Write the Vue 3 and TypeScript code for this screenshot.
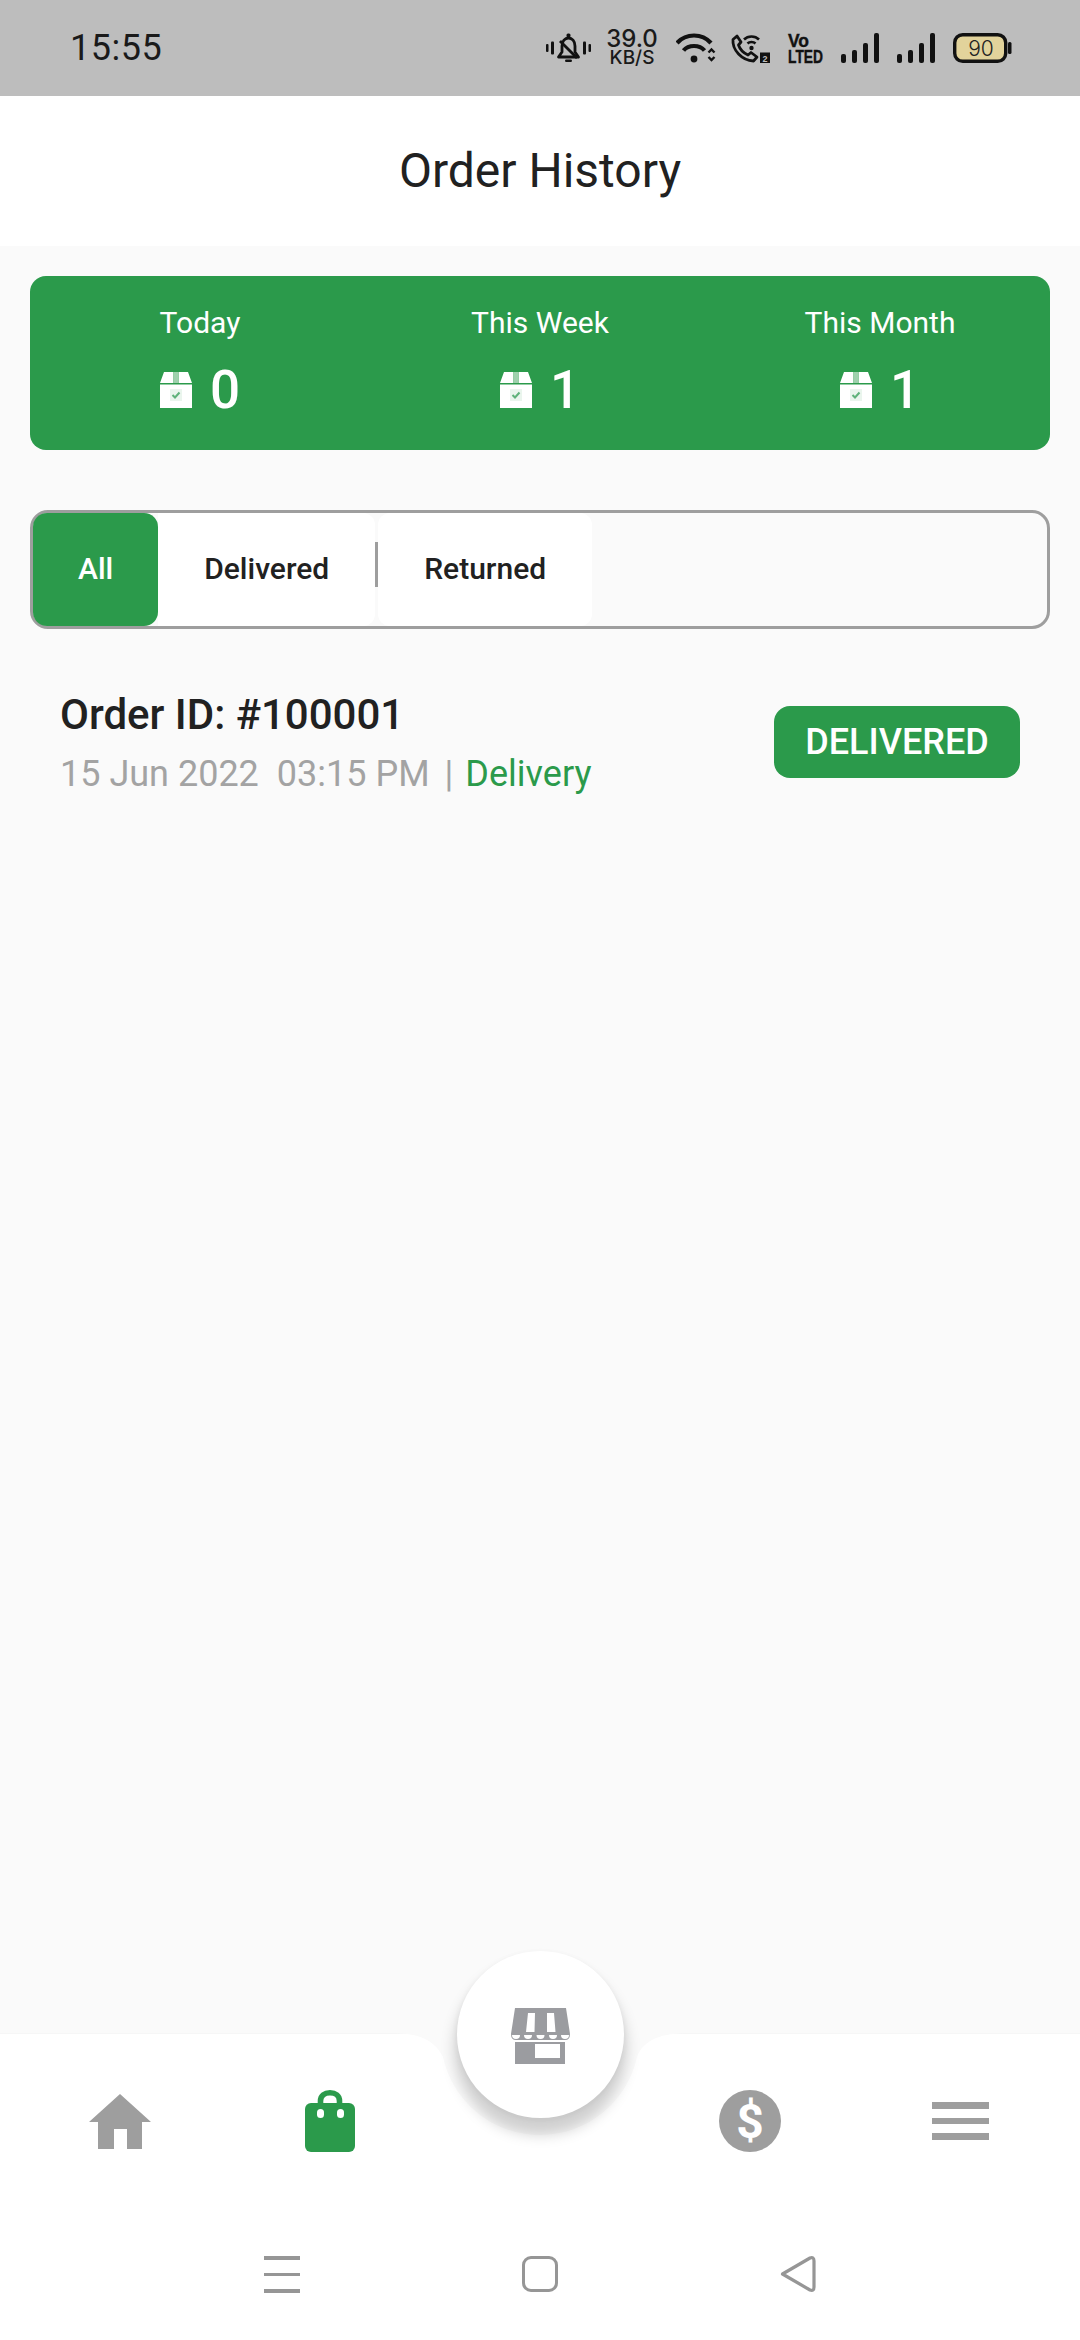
<script setup lang="ts">
const stats = [
  { label: 'Today', value: 0 },
  { label: 'This Week', value: 1 },
  { label: 'This Month', value: 1 },
]
const bars = [
  { x: 0, h: 9 },
  { x: 11, h: 13 },
  { x: 22, h: 20 },
  { x: 33, h: 30 },
]
const scallops = [5, 17, 29.5, 42, 54]
</script>

<template>
  <div class="page">
    <div class="status">
      <span class="time">15:55</span>
      <div class="status-icons">
        <svg class="ic" width="45" height="30" viewBox="0 0 45 30">
          <rect x="0" y="11" width="2.5" height="8" rx="1" />
          <rect x="5" y="8.5" width="3" height="13" rx="1" />
          <rect x="37" y="8.5" width="3" height="13" rx="1" />
          <rect x="42.5" y="11" width="2.5" height="8" rx="1" />
          <path d="M12.5 24 L16 19 V13 C16 8 19 5 22.5 5 C26 5 29 8 29 13 V19 L32.5 24 Z" fill="none" stroke="#111" stroke-width="2.8" stroke-linejoin="round" />
          <path d="M14 8 L31 25" stroke="#111" stroke-width="2.8" />
          <rect x="20.5" y="0.5" width="4" height="4" rx="1.5" />
          <rect x="19" y="26.5" width="7" height="2.5" rx="1.2" />
        </svg>
        <div class="speed"><span class="speed-num">39.0</span><span class="speed-unit">KB/S</span></div>
        <svg class="ic wifi" width="40" height="30" viewBox="0 0 40 30">
          <path d="M1 10 C10 0 26 0 35 10" fill="none" stroke="#111" stroke-width="4.2" />
          <path d="M7.5 17.5 C12.5 11.5 23.5 11.5 28.5 17.5" fill="none" stroke="#111" stroke-width="4.2" />
          <circle cx="18" cy="26" r="3.4" />
          <path d="M32.5 19.5 L35.5 16.5 L38.5 19.5 M32.5 24 L35.5 27 L38.5 24" fill="none" stroke="#111" stroke-width="2.4" />
        </svg>
        <svg class="ic phone" width="40" height="30" viewBox="0 0 40 30">
          <path d="M3 6.5 L7 3 L11 9 L8.5 12 C10 16.5 13.5 20 18 22 L21 19.5 L27 24 L23.5 28 C12 27.5 2 17 3 6.5 Z" fill="none" stroke="#111" stroke-width="2.8" stroke-linejoin="round" />
          <path d="M14 6.5 C18 2.5 25 2.5 29 6.5" fill="none" stroke="#111" stroke-width="2.6" />
          <path d="M17.5 10.5 C19.5 8.5 23.5 8.5 25.5 10.5" fill="none" stroke="#111" stroke-width="2.6" />
          <circle cx="21.5" cy="15" r="2.2" />
          <rect x="30" y="19.5" width="10" height="11.5" fill="#111" />
          <text x="35" y="29" class="two">2</text>
        </svg>
        <svg class="ic volte" width="35" height="38" viewBox="0 -4 35 38">
          <text x="0" y="13.5" class="vo" textLength="21" lengthAdjust="spacingAndGlyphs">Vo</text>
          <text x="0" y="30" class="lte" textLength="35" lengthAdjust="spacingAndGlyphs">LTED</text>
        </svg>
        <svg v-for="n in 2" :key="n" class="ic" width="38" height="30" viewBox="0 0 38 30">
          <rect v-for="b in bars" :key="b.x" :x="b.x" :y="30 - b.h" width="5" :height="b.h" rx="2" />
        </svg>
        <svg class="ic" width="59" height="30" viewBox="0 0 59 30">
          <rect x="1.7" y="1.7" width="51" height="26.6" rx="8" fill="#e2d39b" stroke="#111" stroke-width="3.4" />
          <rect x="55" y="9" width="3.5" height="12" rx="1.5" />
          <text x="28" y="22.5" class="batt">90</text>
        </svg>
      </div>
    </div>

    <header class="header">Order History</header>

    <main class="main">
      <section class="summary">
        <div v-for="s in stats" :key="s.label" class="stat">
          <span class="stat-label">{{ s.label }}</span>
          <div class="stat-value">
            <svg class="box" width="32" height="36" viewBox="0 0 32 36">
              <path d="M4 0 H13.5 V11 H0 Z M18.5 0 H28 L32 11 H18.5 Z" fill="#fff" />
              <rect x="14" y="0" width="4" height="11" fill="#fff" opacity="0.55" />
              <rect x="0" y="12.5" width="32" height="23.5" fill="#fff" />
              <rect x="10" y="17" width="12" height="12" fill="#eaf5ed" />
              <path d="M12.5 23 L15 25.5 L19.5 20.5" fill="none" stroke="#5fb27a" stroke-width="2" />
            </svg>
            <span>{{ s.value }}</span>
          </div>
        </div>
      </section>

      <nav class="tabs">
        <span class="tab active">All</span>
        <span class="tab filled first">Delivered</span>
        <span class="sep"></span>
        <span class="tab filled rounded">Returned</span>
      </nav>

      <article class="order">
        <div class="order-text">
          <div class="order-id">Order ID: #100001</div>
          <div class="order-meta">
            <span>15 Jun 2022</span><span class="time-part">03:15 PM</span><span class="pipe">|</span><span class="kind">Delivery</span>
          </div>
        </div>
        <span class="badge">DELIVERED</span>
      </article>
    </main>

    <footer class="bottom">
      <svg class="notch" width="300" height="110" viewBox="0 0 300 110">
        <path d="M0 0 C28 0 44 6 53 24 C62 66 100 102 150 102 C200 102 238 66 247 24 C254 6 272 0 300 0 Z" fill="#fafafa" />
      </svg>
      <div class="fab">
        <svg width="59" height="56" viewBox="0 0 59 56">
          <path d="M4 0 H55 L59 26 Q59 32 54 32 H5 Q0 32 0 26 Z" fill="#9b9ca0" />
          <path d="M17 5 H24 L23.5 24 H15 Z M36 5 H43 L44.5 24 H36 Z" fill="#fff" />
          <path v-for="c in scallops" :key="c" :d="`M${c - 4} 27 A4 4 0 0 0 ${c + 4} 27 Z`" fill="#fff" />
          <path d="M4 34 H54 V56 H4 Z" fill="#9b9ca0" />
          <rect x="24" y="36" width="25" height="14" fill="#fff" />
        </svg>
      </div>
      <div class="tabbar">
        <div class="cell">
          <svg width="62" height="55" viewBox="0 0 62 55"><path d="M31 0 L62 28 H53 V55 H38 V35 H25 V55 H9 V28 H0 Z" fill="#9e9e9e" /></svg>
        </div>
        <div class="cell">
          <svg width="50" height="62" viewBox="0 0 50 62">
            <path d="M15.5 20 V11 C15.5 5.5 19.5 2.8 25 2.8 C30.5 2.8 34.5 5.5 34.5 11 V20" fill="none" stroke="#2b9a4b" stroke-width="5.6" />
            <rect x="0" y="13" width="50" height="49" rx="6" fill="#2b9a4b" />
            <rect x="12" y="19" width="7" height="9" rx="3.5" fill="#fff" />
            <rect x="32" y="19" width="7" height="9" rx="3.5" fill="#fff" />
          </svg>
        </div>
        <div class="cell"></div>
        <div class="cell">
          <svg width="62" height="62" viewBox="0 0 62 62">
            <circle cx="31" cy="31" r="31" fill="#9e9e9e" />
            <text x="31" y="48" class="dollar">$</text>
          </svg>
        </div>
        <div class="cell">
          <div class="burger"><i></i><i></i><i></i></div>
        </div>
      </div>
      <div class="sysnav">
        <div class="sys-menu"><i></i><i></i><i></i></div>
        <div class="sys-home"></div>
        <svg width="36" height="36" viewBox="0 0 36 36">
          <path d="M2.5 18 L30 2 Q34 0.5 34 5 V31 Q34 35.5 30 34 L2.5 18 Z" fill="none" stroke="#969696" stroke-width="3.2" stroke-linejoin="round" />
        </svg>
      </div>
    </footer>
  </div>
</template>

<style scoped>
.page {
  width: 1080px;
  height: 2340px;
  display: flex;
  flex-direction: column;
  background: #fafafa;
  font-family: Roboto, "Noto Sans", sans-serif;
  color: #212121;
  overflow: hidden;
}
.status {
  height: 96px;
  background: #bdbdbd;
  display: flex;
  align-items: center;
  justify-content: space-between;
  padding: 0 68px 0 70px;
  box-sizing: border-box;
  flex: none;
}
.time {
  font-size: 36px;
  letter-spacing: 0.5px;
  color: #1a1a1a;
}
.status-icons {
  display: flex;
  align-items: center;
  gap: 18px;
}
.ic {
  display: block;
  fill: #111;
}
.wifi {
  margin-left: 2px;
  margin-right: -4px;
}
.volte {
  margin: -4px 0;
  overflow: visible;
}
.speed {
  width: 48px;
  display: flex;
  flex-direction: column;
  align-items: center;
  font-family: Inter, sans-serif;
  color: #1a1a1a;
  margin-top: -3px;
  margin-left: -1px;
}
.speed-num {
  font-size: 24px;
  line-height: 22px;
  font-weight: 500;
}
.speed-unit {
  font-size: 19px;
  line-height: 15px;
  font-weight: 500;
}
.two {
  font: 700 9px "Liberation Sans", sans-serif;
  fill: #bdbdbd;
  text-anchor: middle;
}
.vo {
  font: 700 18px "Liberation Sans", sans-serif;
  stroke: #111;
  stroke-width: 0.4px;
}
.lte {
  font: 700 18px "Liberation Sans", sans-serif;
  stroke: #111;
  stroke-width: 0.4px;
}
.batt {
  font: 300 21px Inter, sans-serif;
  fill: #222;
  text-anchor: middle;
}
.header {
  height: 150px;
  background: #fff;
  flex: none;
  display: flex;
  align-items: center;
  justify-content: center;
  font-size: 48px;
  box-sizing: border-box;
  padding-bottom: 2px;
}
.main {
  flex: 1;
  padding: 30px 30px 0;
  display: flex;
  flex-direction: column;
}
.summary {
  height: 174px;
  background: #2b9a4b;
  border-radius: 16px;
  display: grid;
  grid-template-columns: repeat(3, 1fr);
  color: #fff;
}
.stat {
  display: flex;
  flex-direction: column;
  align-items: center;
  padding-top: 28px;
}
.stat-label {
  font-size: 30px;
  line-height: 38px;
}
.stat-value {
  display: flex;
  align-items: center;
  gap: 18px;
  margin-top: 17px;
  font-size: 53px;
  font-weight: 500;
  line-height: 62px;
}
.box {
  display: block;
}
.tabs {
  margin-top: 60px;
  height: 119px;
  box-sizing: border-box;
  border: 3px solid #9e9e9e;
  border-radius: 18px;
  display: flex;
  align-items: stretch;
}
.tab {
  display: flex;
  align-items: center;
  padding: 0 46px;
  font-size: 30px;
  font-weight: 500;
  color: #212121;
  padding-bottom: 2px;
}
.filled {
  background: #fff;
}
.rounded {
  border-radius: 12px;
}
.active {
  background: #2b9a4b;
  color: #fff;
  border-radius: 14px;
  padding: 0 45px 2px;
  position: relative;
  z-index: 1;
}
.first {
  border-radius: 0 12px 12px 0;
  padding-right: 46px;
}
.sep {
  width: 3px;
  height: 45px;
  background: #9e9e9e;
  align-self: center;
  margin-top: -10px;
}
.order {
  margin-top: 59px;
  padding: 0 30px;
  display: flex;
  align-items: center;
  justify-content: space-between;
}
.order-id {
  font-size: 42px;
  font-weight: 500;
  line-height: 54px;
}
.order-meta {
  margin-top: 5px;
  font-size: 36px;
  line-height: 54px;
  color: #a3a3a3;
}
.time-part {
  margin-left: 18px;
}
.pipe {
  margin: 0 12px 0 15px;
}
.kind {
  color: #2b9a4b;
}
.badge {
  width: 246px;
  height: 72px;
  border-radius: 16px;
  background: #2b9a4b;
  color: #fff;
  font-size: 36px;
  font-weight: 500;
  display: flex;
  align-items: center;
  justify-content: center;
  margin-top: -5px;
}
.bottom {
  position: relative;
  height: 307px;
  flex: none;
  background: #fff;
  border-top: 1px solid #f6f6f6;
  box-sizing: border-box;
  display: flex;
  flex-direction: column;
}
.notch {
  position: absolute;
  left: 390px;
  top: -1px;
}
.fab {
  position: absolute;
  left: 457px;
  top: -83px;
  width: 167px;
  height: 167px;
  border-radius: 50%;
  background: #fff;
  box-shadow: 0 14px 14px 3px rgba(0, 0, 0, 0.17), 0 2px 6px rgba(0, 0, 0, 0.05);
  display: flex;
  align-items: center;
  justify-content: center;
  padding-top: 2px;
  box-sizing: border-box;
}
.tabbar {
  margin-top: 55px;
  height: 64px;
  padding: 0 15px;
  display: grid;
  grid-template-columns: repeat(5, 210px);
}
.cell {
  display: flex;
  align-items: center;
  justify-content: center;
}
.cell svg {
  display: block;
}
.burger {
  width: 57px;
  display: flex;
  flex-direction: column;
  gap: 9px;
}
.burger i {
  display: block;
  height: 6.5px;
  background: #9e9e9e;
}
.sysnav {
  margin-top: 103px;
  display: flex;
  justify-content: center;
  align-items: center;
  gap: 222px;
}
.sys-menu {
  width: 36px;
  display: flex;
  flex-direction: column;
  gap: 13px;
}
.sys-menu i {
  display: block;
  height: 3.5px;
  background: #969696;
}
.sys-home {
  width: 36px;
  height: 36px;
  box-sizing: border-box;
  border: 3.4px solid #969696;
  border-radius: 9px;
}
.dollar {
  font: 700 48px Roboto, sans-serif;
  fill: #fff;
  text-anchor: middle;
}
</style>
